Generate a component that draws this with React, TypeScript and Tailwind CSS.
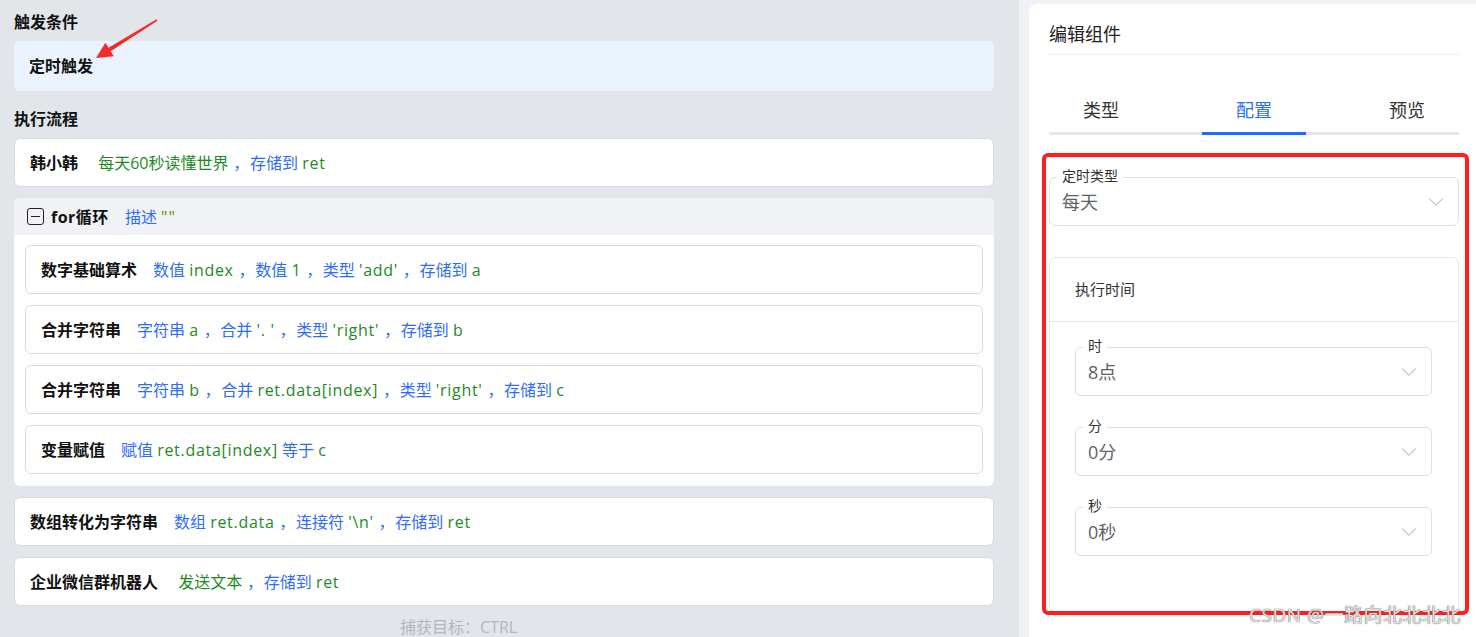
import { ChevronDown } from "lucide-react";

type Seg = [string, string];

const B = "b";
const G = "g";

const STEPS: { label: string; segs: Seg[] }[] = [
  {
    label: "数字基础算术",
    segs: [[B, "数值 "], [G, "index"], [B, " ，"], [B, "数值 "], [G, "1"], [B, " ，"], [B, "类型 "], [G, "'add'"], [B, " ，"], [B, "存储到 "], [G, "a"]],
  },
  {
    label: "合并字符串",
    segs: [[B, "字符串 "], [G, "a"], [B, " ，"], [B, "合并 "], [G, "'. '"], [B, " ，"], [B, "类型 "], [G, "'right'"], [B, " ，"], [B, "存储到 "], [G, "b"]],
  },
  {
    label: "合并字符串",
    segs: [[B, "字符串 "], [G, "b"], [B, " ，"], [B, "合并 "], [G, "ret.data[index]"], [B, " ，"], [B, "类型 "], [G, "'right'"], [B, " ，"], [B, "存储到 "], [G, "c"]],
  },
  {
    label: "变量赋值",
    segs: [[B, "赋值 "], [G, "ret.data[index]"], [B, " 等于 "], [G, "c"]],
  },
];

const hasCjk = (s: string) => /[\u4e00-\u9fff]/.test(s);

function Segs({ segs }: { segs: Seg[] }) {
  return (
    <span className="whitespace-pre text-[16px]">
      {segs.map((s, i) => (
        <span
          key={i}
          className={
            (s[0] === B ? "text-[#2f6df6]" : "text-[#1e8a1e]") +
            (hasCjk(s[1]) ? "" : " tracking-[0.7px]")
          }
        >
          {s[1]}
        </span>
      ))}
    </span>
  );
}

function Card({ label, segs }: { label: string; segs: Seg[] }) {
  return (
    <div className="h-[49px] bg-white border border-[#d7dae0] rounded-[6px] flex items-center pl-[15px] gap-4">
      <span className="font-bold text-[16px] text-[#111]">{label}</span>
      <Segs segs={segs} />
    </div>
  );
}

function Select({ label, value }: { label: string; value: string }) {
  return (
    <div className="relative h-[49px] border border-[#dcdfe6] rounded-[6px] flex items-center justify-between pl-[12px] pr-[9px]">
      <span className="absolute top-[-11px] left-[7px] bg-white px-[5px] text-[14px] leading-[18px] text-[#333]">
        {label}
      </span>
      <span className="text-[18px] text-[#5f6368] pt-[2px]">{value}</span>
      <ChevronDown size={26} strokeWidth={1} color="#c6c9d0" />
    </div>
  );
}

export default function App() {
  return (
    <div className="relative w-[1476px] h-[637px] overflow-hidden flex bg-[#e2e5ea] font-[family-name:'Open_Sans','Noto_Sans_CJK_SC',sans-serif] text-[#111]">
      {/* left: flow editor */}
      <div className="w-[1019px] shrink-0 pl-[14px]">
        <div className="w-[980px] flex flex-col">
          <div className="pt-[12px] font-bold text-[16px] leading-[20px]">触发条件</div>
          <div className="mt-[9px] h-[50px] bg-[#ebf3fe] rounded-[6px] flex items-center pl-[15px] font-bold text-[16px]">
            定时触发
          </div>
          <div className="mt-[18px] font-bold text-[16px] leading-[20px]">执行流程</div>

          <div className="mt-[9px] flex flex-col gap-[11px]">
            <Card label="韩小韩" segs={[[G, " 每天60秒读懂世界"], [B, " ，"], [B, "存储到 "], [G, "ret"]]} />

            <div className="bg-white rounded-[6px] overflow-hidden">
              <div className="h-[37px] bg-[#f0f2f5] flex items-center pl-[13px]">
                <span className="w-[17px] h-[17px] border-[1.5px] border-[#222] rounded-[3px] flex items-center justify-center">
                  <span className="w-[9px] h-[1.5px] bg-[#222]" />
                </span>
                <span className="ml-[7px] font-bold text-[16px] tracking-[0.5px]">for循环</span>
                <span className="ml-4 whitespace-pre text-[16px]">
                  <span className="text-[#2f6df6]">描述 </span>
                  <span className="text-[#6b8a00] tracking-[1px]">""</span>
                </span>
              </div>
              <div className="px-[11px] pt-[10px] pb-[12px] flex flex-col gap-[11px]">
                {STEPS.map((s, i) => (
                  <Card key={i} label={s.label} segs={s.segs} />
                ))}
              </div>
            </div>

            <Card
              label="数组转化为字符串"
              segs={[[B, "数组 "], [G, "ret.data"], [B, " ，"], [B, "连接符 "], [G, "'\\n'"], [B, " ，"], [B, "存储到 "], [G, "ret"]]}
            />
            <Card label="企业微信群机器人" segs={[[G, " 发送文本"], [B, " ，"], [B, "存储到 "], [G, "ret"]]} />
          </div>

          <div className="ml-[386px] mt-[12px] text-[16px] leading-[18px] text-[#b3b7be]">捕获目标：CTRL</div>
        </div>
      </div>

      {/* right: component editor */}
      <div className="flex-1 bg-[#f0f2f5] pl-[10px] pt-[4px]">
        <div className="relative h-full bg-white rounded-tl-[8px] pl-[20px] pr-[17px]">
          <div className="pt-[17px] pb-[7px] border-b border-[#eceef2] text-[18px] leading-[26px] text-[#222]">
            编辑组件
          </div>

          <div className="mt-[42px] flex justify-between border-b-[3px] border-[#e4e7ed]">
            <div className="w-[104px] text-center pb-[9px] text-[18px] leading-[26px] text-[#333]">类型</div>
            <div className="w-[104px] text-center pb-[6px] -mb-[3px] border-b-[3px] border-[#1a6dff] text-[18px] leading-[26px] text-[#2f6df6]">
              配置
            </div>
            <div className="w-[104px] text-center pb-[9px] text-[18px] leading-[26px] text-[#333]">预览</div>
          </div>

          <div className="mt-[42px]">
            <Select label="定时类型" value="每天" />
          </div>

          <div className="mt-[31px] border border-[#e4e7ed] rounded-[6px]">
            <div className="h-[64px] flex items-center pl-[25px] border-b border-[#e4e7ed] text-[15px] text-[#333]">
              执行时间
            </div>
            <div className="pl-[25px] pr-[26px] pt-[25px] pb-[55px] flex flex-col gap-[31px]">
              <Select label="时" value="8点" />
              <Select label="分" value="0分" />
              <Select label="秒" value="0秒" />
            </div>
          </div>

          {/* red annotation box */}
          <div className="absolute left-[13px] top-[149px] w-[427px] h-[462px] border-[4px] border-[#ff1e1e] rounded-[6px] pointer-events-none" />
        </div>
      </div>

      {/* red annotation arrow */}
      <svg className="absolute left-0 top-0 pointer-events-none" width="170" height="70" viewBox="0 0 170 70">
        <polygon
          points="96,58 105.4,42.7 108.5,47.8 156.6,19.3 157.4,20.7 110.7,51.2 113.8,56.3"
          fill="#f52a2a"
        />
      </svg>

      {/* watermark */}
      <div className="absolute right-[15px] top-[602px] text-[19px] leading-[26px] tracking-[0.5px] text-[#e2e2e2] [text-shadow:0_0_1px_#6f6f6f,0_0_1px_#6f6f6f] pointer-events-none">
        CSDN @一路向北北北北
      </div>
    </div>
  );
}
